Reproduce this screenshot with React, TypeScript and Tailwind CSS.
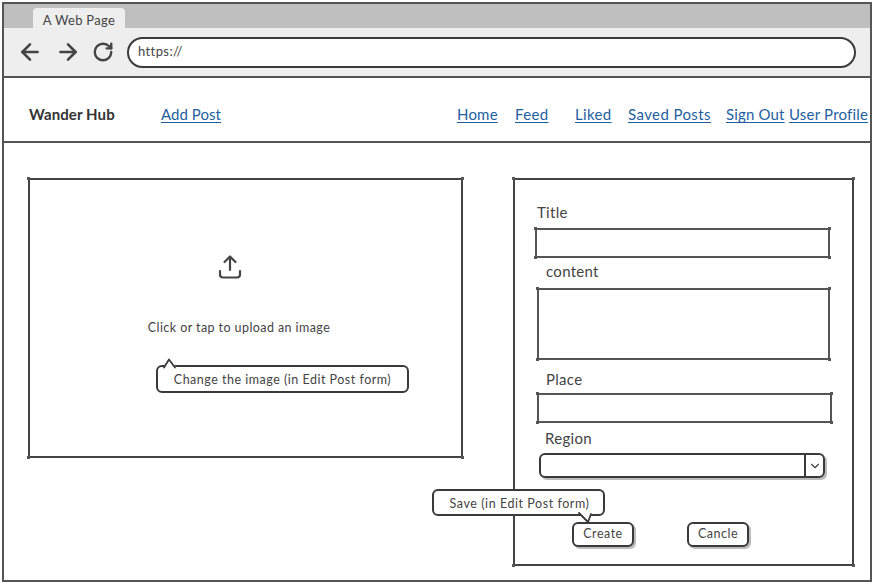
import { ArrowLeft, ArrowRight, ChevronDown, RotateCw } from "lucide-react";

const LINKS_RIGHT = [
  { label: "Home", cls: "w-[41px] tracking-[0.2px]" },
  { label: "Feed", cls: "w-[34px] ml-[17px] tracking-[0.35px]" },
  { label: "Liked", cls: "w-[37px] ml-[26px] tracking-[0.35px]" },
  { label: "Saved Posts", cls: "w-[83px] ml-[16px] tracking-[0.4px]" },
  { label: "Sign Out", cls: "w-[59px] ml-[15px] tracking-[0.15px]" },
  { label: "User Profile", cls: "w-[79px] ml-[4px] tracking-[0.2px]" },
];

function Corners() {
  return (
    <>
      <span className="absolute -left-[3px] -top-[3px] size-[3px] bg-[#555]" />
      <span className="absolute -right-[3px] -top-[3px] size-[3px] bg-[#555]" />
      <span className="absolute -left-[3px] -bottom-[3px] size-[3px] bg-[#555]" />
      <span className="absolute -right-[3px] -bottom-[3px] size-[3px] bg-[#555]" />
    </>
  );
}

function NavLink({ label, cls }: { label: string; cls: string }) {
  return (
    <a className={`${cls} shrink-0 whitespace-nowrap text-[15px] text-[#1f5f9f] underline underline-offset-2`}>
      {label}
    </a>
  );
}

function SketchButton({ label, cls }: { label: string; cls: string }) {
  return (
    <button className={`${cls} flex h-[25px] w-[62px] items-center justify-center rounded-[6px] border-2 border-[#3a3a3a] bg-white text-[12.5px] tracking-[0.5px] text-[#444] shadow-[2px_2px_0_#bbb]`}>
      {label}
    </button>
  );
}

export default function App() {
  return (
    <div className="h-[584px] w-[874px] overflow-hidden bg-white pl-[2px] pt-[2px] font-['Lato',sans-serif] text-[#333]">
      <div className="relative flex h-[580px] w-[870px] flex-col border-2 border-[#555]">
        {/* browser chrome */}
        <div className="flex h-[24px] shrink-0 items-end bg-[#bfbfbf] pl-[29px]">
          <div className="flex h-[20px] w-[92px] items-center justify-center rounded-t-[4px] bg-[#eeeeee] pt-[5px] text-[13px] tracking-[0.3px] text-[#444]">
            A Web Page
          </div>
        </div>
        <div className="flex h-[50px] shrink-0 items-center border-b-2 border-[#555] bg-[#eeeeee] pl-[13px] pr-[14px]">
          <ArrowLeft size={26} strokeWidth={2.4} className="shrink-0 text-[#444]" />
          <ArrowRight size={26} strokeWidth={2.4} className="ml-[12px] shrink-0 text-[#444]" />
          <RotateCw size={22} strokeWidth={2.6} className="ml-[11px] shrink-0 text-[#444]" />
          <div className="ml-[13px] flex h-[31px] flex-1 items-center rounded-[16px] border-2 border-[#3a3a3a] bg-white pl-[9px] text-[13px] tracking-[0.4px] text-[#444]">
            https://
          </div>
        </div>

        {/* nav */}
        <div className="flex h-[65px] shrink-0 items-center border-b-2 border-[#555] pl-[25px] pr-[2px] pt-[10px]">
          <span className="w-[132px] shrink-0 text-[15px] font-bold tracking-[0.1px] text-[#333]">Wander Hub</span>
          <NavLink label="Add Post" cls="w-[60px] tracking-[0.05px]" />
          <div className="ml-auto flex items-center">
            {LINKS_RIGHT.map((l) => (
              <NavLink key={l.label} label={l.label} cls={l.cls} />
            ))}
          </div>
        </div>

        {/* body */}
        <div className="flex flex-1 items-start pl-[24px] pt-[35px]">
          <div className="relative flex h-[280px] w-[435px] shrink-0 flex-col items-center border-2 border-[#444] pt-[74px]">
            <Corners />
            <svg width="26" height="26" viewBox="0 0 26 26" fill="none" stroke="#444" strokeWidth="2.2" strokeLinecap="round" strokeLinejoin="round" className="ml-[-31px]">
              <path d="M13 16V2.5M7.5 8 13 2.5 18.5 8" />
              <path d="M3 17v3.5a3 3 0 0 0 3 3h14a3 3 0 0 0 3-3V17" />
            </svg>
            <p className="ml-[-13px] mt-[39px] whitespace-nowrap text-[12.5px] tracking-[0.42px] text-[#444]">
              Click or tap to upload an image
            </p>
          </div>

          <div className="relative ml-[50px] flex h-[388px] w-[341px] shrink-0 flex-col border-2 border-[#444] pl-[20px]">
            <Corners />
            <label className="ml-[2px] mt-[23px] h-[18px] text-[15px] leading-[18px] tracking-[0.3px] text-[#444]">Title</label>
            <div className="relative mt-[7px] h-[30px] w-[295px] border-2 border-[#555]">
              <Corners />
            </div>
            <label className="ml-[11px] mt-[4px] h-[18px] text-[15px] leading-[18px] tracking-[0.3px] text-[#444]">content</label>
            <div className="relative ml-[2px] mt-[8px] h-[72px] w-[293px] border-2 border-[#555]">
              <Corners />
            </div>
            <label className="ml-[11px] mt-[10px] h-[18px] text-[15px] leading-[18px] tracking-[0.3px] text-[#444]">Place</label>
            <div className="relative ml-[2px] mt-[5px] h-[30px] w-[295px] border-2 border-[#555]">
              <Corners />
            </div>
            <label className="ml-[10px] mt-[6px] h-[18px] text-[15px] leading-[18px] tracking-[0.3px] text-[#444]">Region</label>
            <div className="ml-[4px] mt-[6px] flex h-[25px] w-[286px] justify-end rounded-[6px] border-2 border-[#3a3a3a] shadow-[2px_2px_0_#bbb]">
              <div className="flex w-[19px] items-center justify-center border-l-2 border-[#3a3a3a]">
                <ChevronDown size={14} strokeWidth={2} className="text-[#444]" />
              </div>
            </div>
            <div className="mt-[44px] flex pl-[37px]">
              <SketchButton label="Create" cls="" />
              <SketchButton label="Cancle" cls="ml-[53px]" />
            </div>
          </div>
        </div>

        {/* callouts */}
        <div className="absolute left-[152px] top-[361px] flex h-[28px] w-[253px] items-center justify-center rounded-[6px] border-2 border-[#3a3a3a] bg-white pt-[3px] text-[12.5px] tracking-[0.5px] text-[#444]">
          <svg width="24" height="12" viewBox="0 0 24 12" fill="none" className="absolute -top-[9px] left-[3px]">
            <path d="M3 10 8 2.5 l8 7.5" fill="white" />
            <path d="M3 9.5 8 1.5l6 8" stroke="#3a3a3a" strokeWidth="1.8" strokeLinecap="round" strokeLinejoin="round" />
          </svg>
          Change the image (in Edit Post form)
        </div>
        <div className="absolute left-[428px] top-[485px] flex h-[27px] w-[173px] items-center justify-center rounded-[6px] border-2 border-[#3a3a3a] bg-white pl-[2px] pt-[3px] text-[12.5px] tracking-[0.55px] text-[#444]">
          <svg width="22" height="12" viewBox="0 0 22 12" fill="none" className="absolute -bottom-[10px] right-[3px]">
            <path d="M1 1l9 9 4-9z" fill="white" />
            <path d="M1 1l9 9 3-8" stroke="#3a3a3a" strokeWidth="1.8" strokeLinecap="round" strokeLinejoin="round" />
          </svg>
          Save (in Edit Post form)
        </div>
      </div>
    </div>
  );
}
